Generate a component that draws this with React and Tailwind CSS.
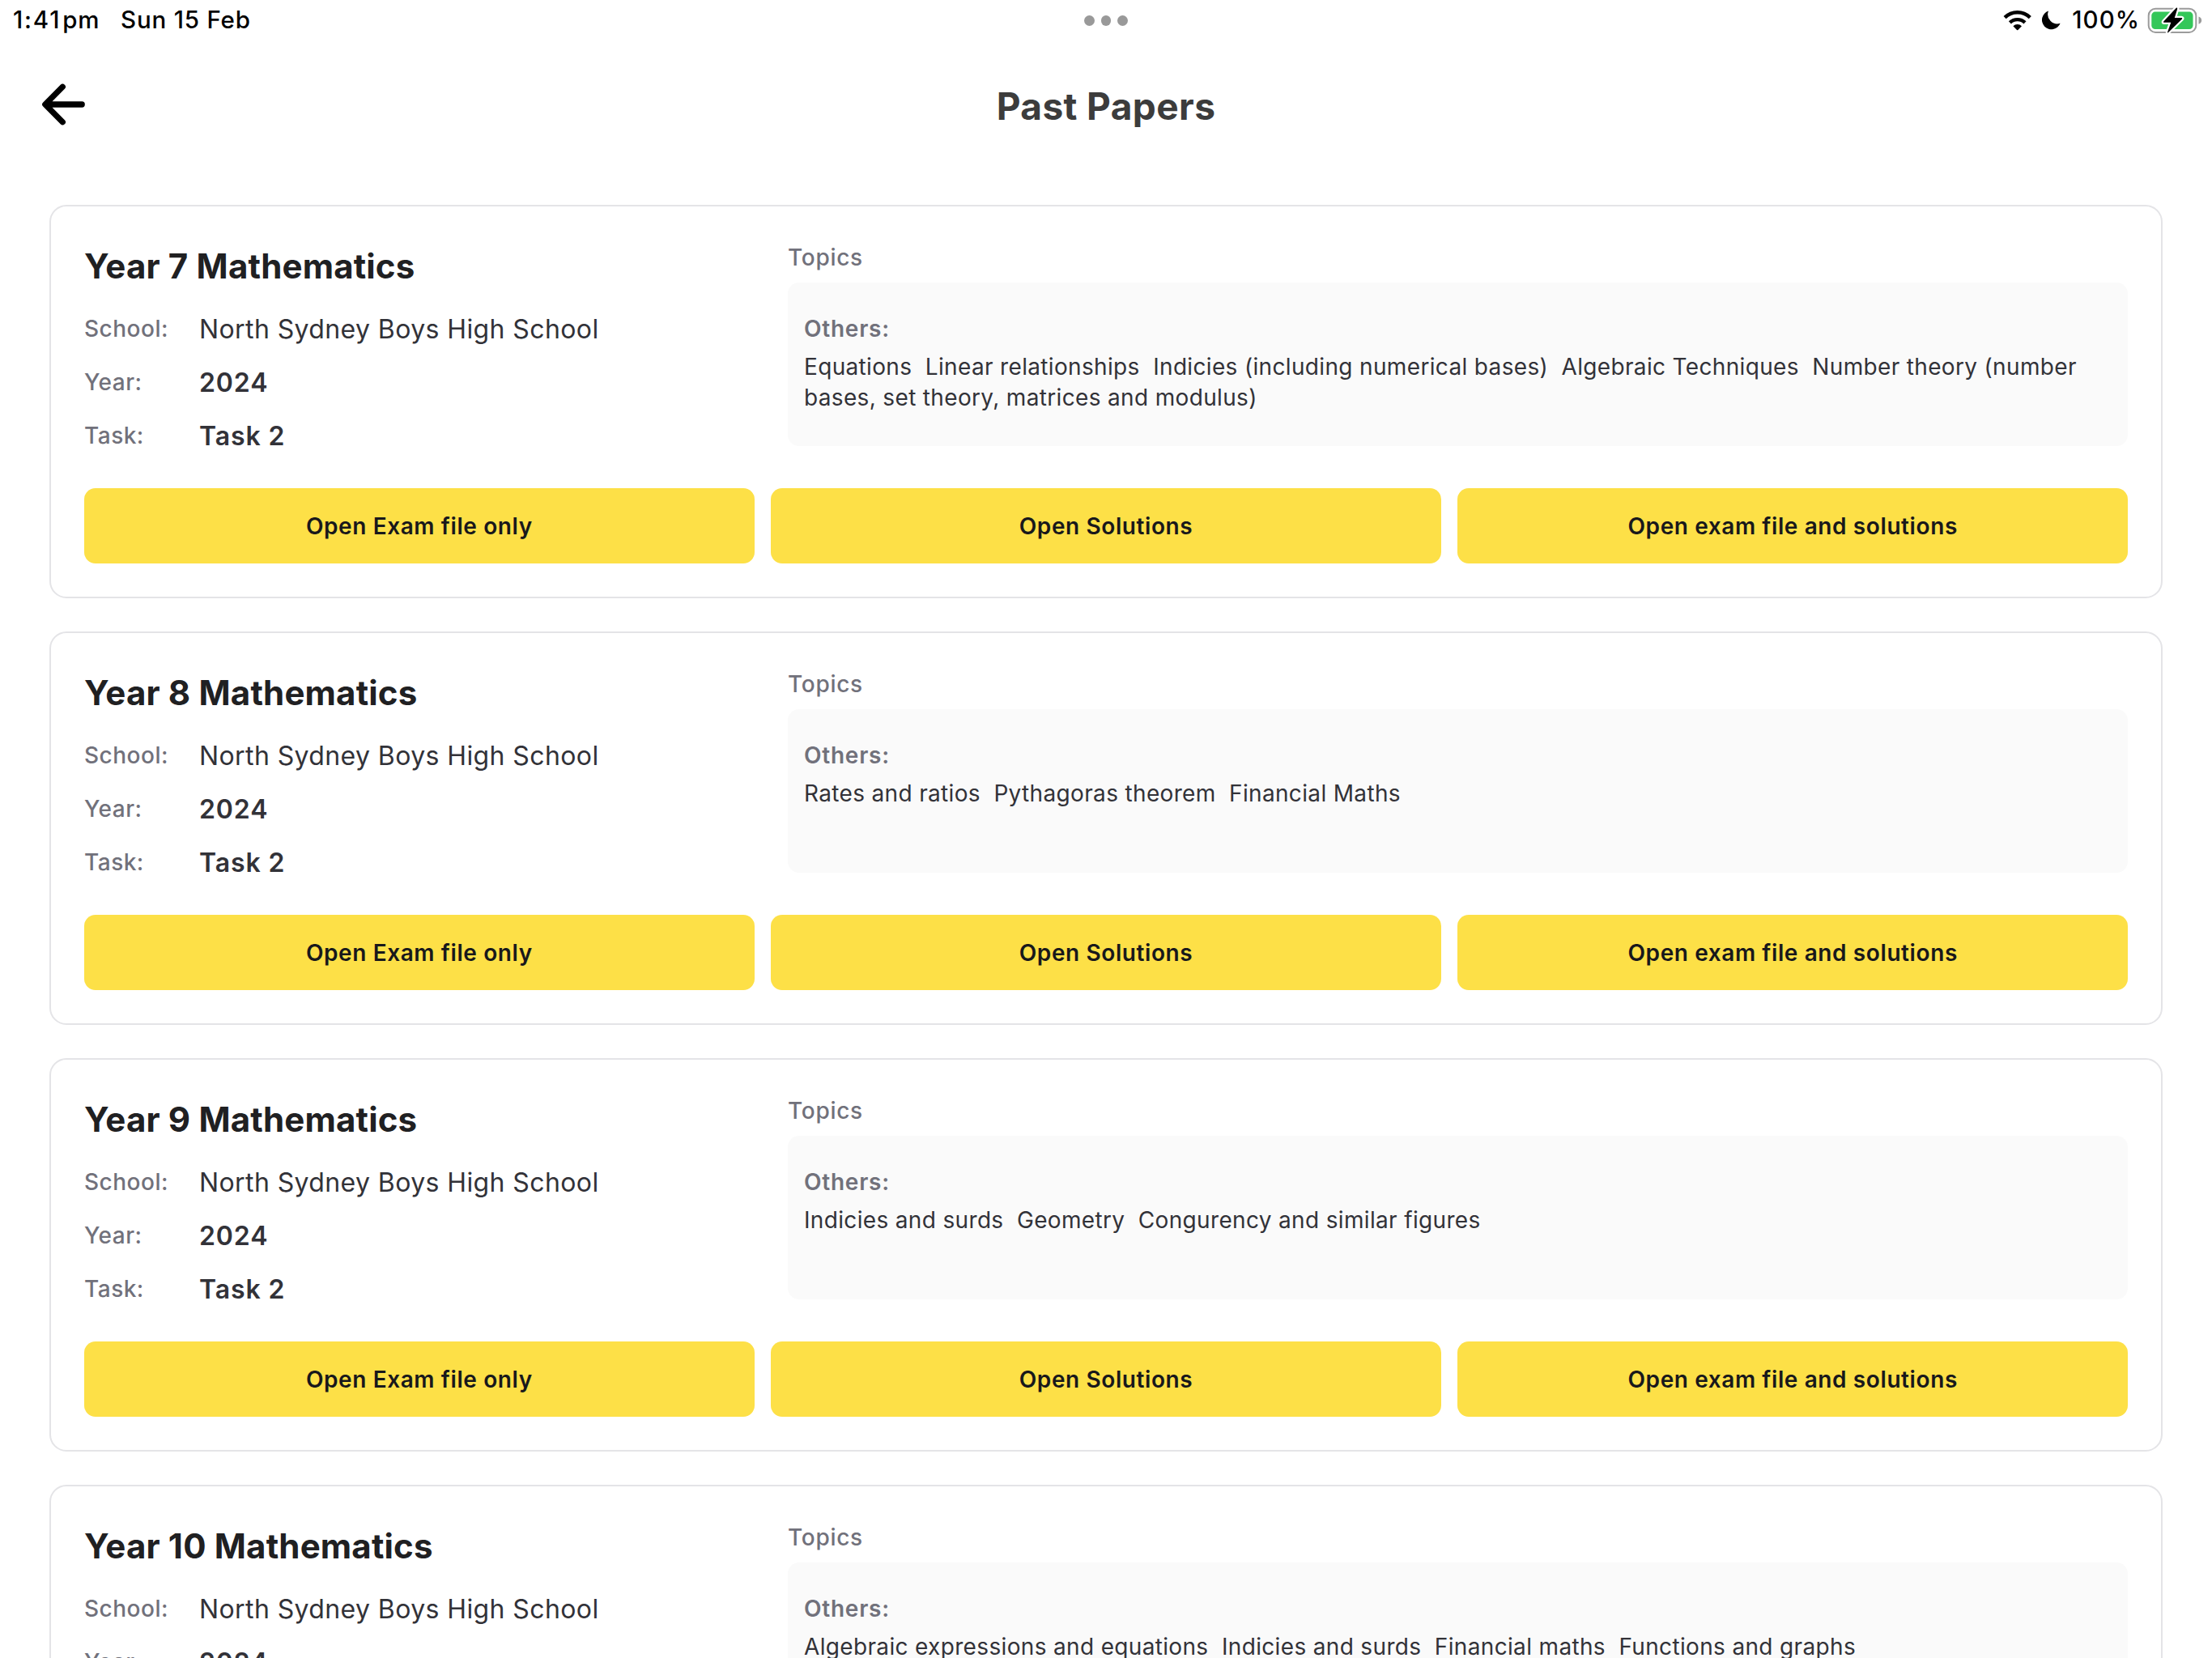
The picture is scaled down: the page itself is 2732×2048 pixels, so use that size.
const papers = [
  {
    id: 1,
    title: "Year 7 Mathematics",
    school: "North Sydney Boys High School",
    year: "2024",
    task: "Task 2",
    topics: [
      "Equations",
      "Linear relationships",
      "Indicies (including numerical bases)",
      "Algebraic Techniques",
      "Number theory (number bases, set theory, matrices and modulus)",
    ],
  },
  {
    id: 2,
    title: "Year 8 Mathematics",
    school: "North Sydney Boys High School",
    year: "2024",
    task: "Task 2",
    topics: ["Rates and ratios", "Pythagoras theorem", "Financial Maths"],
  },
  {
    id: 3,
    title: "Year 9 Mathematics",
    school: "North Sydney Boys High School",
    year: "2024",
    task: "Task 2",
    topics: ["Indicies and surds", "Geometry", "Congurency and similar figures"],
  },
  {
    id: 4,
    title: "Year 10 Mathematics",
    school: "North Sydney Boys High School",
    year: "2024",
    task: "Task 2",
    topics: ["Algebraic expressions and equations", "Indicies and surds", "Financial maths", "Functions and graphs"],
  },
];

const WifiIcon = () => (
  <svg width="36" height="26" viewBox="0 0 36 26" fill="none" aria-hidden="true">
    <path d="M2.1 9.6a22.2 22.2 0 0 1 31.2 0" stroke="#000" strokeWidth="4.4" />
    <path d="M8.4 15.9a13.3 13.3 0 0 1 18.6 0" stroke="#000" strokeWidth="4.4" />
    <path d="M12.4 20.2a7.6 7.6 0 0 1 10.6 0l-4.6 4.8a1 1 0 0 1-1.4 0z" fill="#000" />
  </svg>
);

const MoonIcon = () => (
  <svg width="23" height="24" viewBox="0 0 23 24" aria-hidden="true">
    <path d="M8 .5A11.7 11.7 0 1 0 22.6 15.8A11.7 11.7 0 0 1 8 .5z" fill="#000" />
  </svg>
);

const BatteryIcon = () => (
  <svg width="68" height="34" viewBox="0 0 68 34" aria-hidden="true">
    <rect x="1.7" y="2.7" width="58.6" height="29.2" rx="8.5" fill="none" stroke="#9b9b9b" strokeWidth="2" />
    <path d="M63.5 12.6c2.4.8 3.6 2.4 3.6 4.6s-1.2 3.8-3.6 4.6z" fill="#9b9b9b" />
    <rect x="5.3" y="6.6" width="51.2" height="21.4" rx="4.5" fill="#34c759" />
    <path
      d="M35.800 1.800L20.200 18.600q-.8 1.200.7 1.200h8.400l-4.200 11.600q-.3 1.600 1 .6L43 15.400q.8-1.300-.7-1.300h-8.500L37.200 3q.2-2-1.400-1.200z"
      fill="#000"
      stroke="#fff"
      strokeWidth="4.5"
      strokeLinejoin="round"
      paintOrder="stroke"
    />
  </svg>
);

const StatusBar = () => (
  <div className="grid h-12 shrink-0 grid-cols-[1fr_auto_1fr] items-center px-4 text-[29.5px] font-medium text-black">
    <div className="flex items-center pt-[1px]">
      <span className="tracking-[1.8px]">1:41</span>
      <span className="ml-[2px] tracking-[0.7px]">pm</span>
      <span className="ml-[26px] tracking-[0.8px]">Sun 15 Feb</span>
    </div>
    <div className="flex gap-2 pt-[3px]">
      <span className="size-[12.5px] rounded-full bg-[#999]" />
      <span className="size-[12.5px] rounded-full bg-[#999]" />
      <span className="size-[12.5px] rounded-full bg-[#999]" />
    </div>
    <div className="-mr-1 flex items-center justify-end pt-[1px]">
      <WifiIcon />
      <span className="ml-3">
        <MoonIcon />
      </span>
      <span className="ml-3.5 tracking-[1px]">100%</span>
      <span className="ml-[9px]">
        <BatteryIcon />
      </span>
    </div>
  </div>
);

const InfoRow = ({ label, value, strong = false }) => (
  <div className="flex h-[66px] items-center">
    <span className="w-[142px] text-[28px] font-medium tracking-[0.5px] text-zinc-500">{label}</span>
    <span
      className={`pt-[2px] text-[32px] text-[#323238] ${strong ? "font-semibold tracking-[0.9px]" : "tracking-[0.4px]"}`}
    >
      {value}
    </span>
  </div>
);

const PaperButton = ({ children }) => (
  <button className="h-[93px] flex-1 rounded-[14px] bg-[#fde047] text-[28px] font-semibold tracking-[0.6px] text-zinc-900">
    {children}
  </button>
);

const PaperCard = ({ paper }) => (
  <div className="h-[486px] shrink-0 rounded-[21px] border-2 border-zinc-200 bg-white p-[41px]">
    <div className="flex gap-[41px]">
      {/* details */}
      <div className="flex-1">
        <h2 className="text-[42px] leading-[65px] font-bold tracking-[0.18px] text-[#202022]">{paper.title}</h2>
        <div className="mt-3">
          <InfoRow label="School:" value={paper.school} />
          <InfoRow label="Year:" value={paper.year} strong />
          <InfoRow label="Task:" value={paper.task} strong />
        </div>
      </div>

      {/* topics */}
      <div className="w-[1655px]">
        <p className="pt-[1px] text-[28px] leading-[42px] font-medium tracking-[0.7px] text-zinc-500">Topics</p>
        <div className="mt-[10px] h-[202px] rounded-[14px] bg-[#fafafa] px-5 pt-[38px] text-[28px] leading-[38px]">
          <p className="font-semibold tracking-[0.75px] text-zinc-500">Others:</p>
          <p className="mt-[9px] whitespace-pre-wrap tracking-[0.34px] text-[#323238]">{paper.topics.join("  ")}</p>
        </div>
      </div>
    </div>

    {/* actions */}
    <div className="mt-8 flex gap-[20.5px]">
      <PaperButton>Open Exam file only</PaperButton>
      <PaperButton>Open Solutions</PaperButton>
      <PaperButton>Open exam file and solutions</PaperButton>
    </div>
  </div>
);

export default function App() {
  return (
    <div className="flex h-[2048px] w-[2732px] flex-col overflow-hidden bg-white font-['Inter',sans-serif]">
      <StatusBar />

      {/* header */}
      <header className="grid h-[166px] shrink-0 grid-cols-[1fr_auto_1fr] items-center px-[50px]">
        <button aria-label="Back" className="w-fit pb-1">
          <svg width="58" height="58" viewBox="0 0 58 58" fill="none" aria-hidden="true">
            <path
              d="M51.200 29H7M27.300 7.300L5.800 29L27.300 50.700"
              stroke="#000"
              strokeWidth="7.3"
              strokeLinecap="round"
              strokeLinejoin="round"
            />
          </svg>
        </button>
        <h1 className="text-[46px] font-bold tracking-[0.4px] text-[#3c3c3c]">Past Papers</h1>
      </header>

      <main className="flex flex-col gap-[41px] px-[61px] pt-[39px]">
        {papers.map((paper) => (
          <PaperCard key={paper.id} paper={paper} />
        ))}
      </main>
    </div>
  );
}
